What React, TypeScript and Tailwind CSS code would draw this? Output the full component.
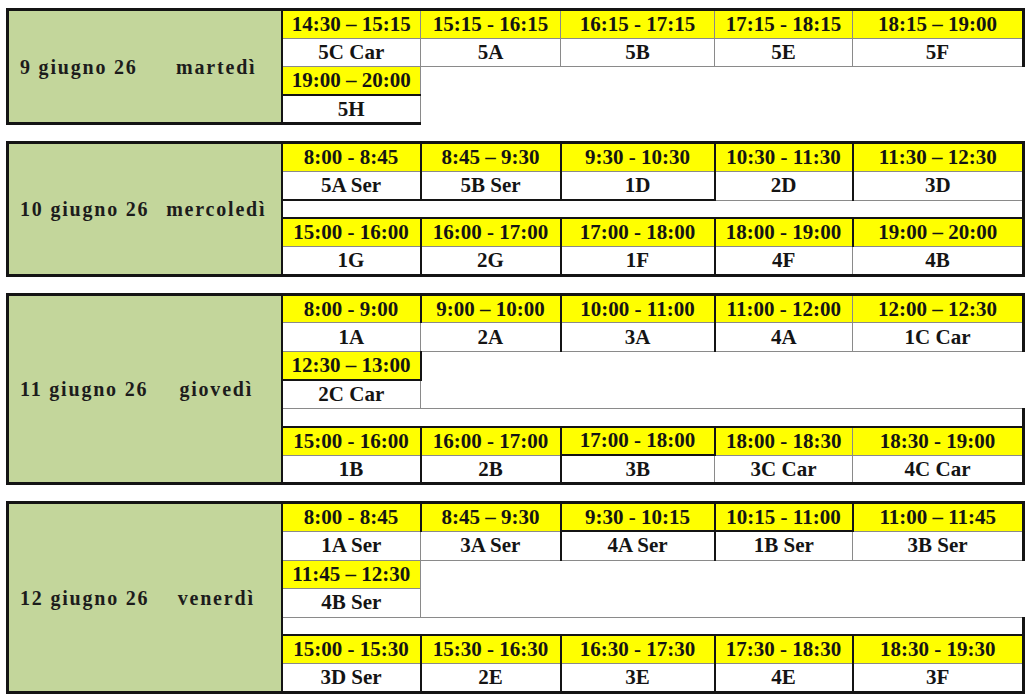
type Cell = { t?: string; y?: boolean; cs?: number; rs?: number; b: string; sp?: boolean };

// border per side: o = outer (3px), k = thick (2px), g = thin grey, n = none
const bt: Record<string, string> = {
  o: 'border-t-[3px] border-t-[#141414]',
  k: 'border-t-2 border-t-[#141414]',
  g: 'border-t border-t-[#8a8a8a]',
  n: 'border-t-0',
};
const br: Record<string, string> = {
  o: 'border-r-[3px] border-r-[#141414]',
  k: 'border-r-2 border-r-[#141414]',
  g: 'border-r border-r-[#8a8a8a]',
  n: 'border-r-0',
};
const bb: Record<string, string> = {
  o: 'border-b-[3px] border-b-[#141414]',
  k: 'border-b-2 border-b-[#141414]',
  g: 'border-b border-b-[#8a8a8a]',
  n: 'border-b-0',
};
const bl: Record<string, string> = {
  o: 'border-l-[3px] border-l-[#141414]',
  k: 'border-l-2 border-l-[#141414]',
  g: 'border-l border-l-[#8a8a8a]',
  n: 'border-l-0',
};

const borders = (s: string) => `${bt[s[0]]} ${br[s[1]]} ${bb[s[2]]} ${bl[s[3]]}`;

const Y = (t: string, b: string): Cell => ({ t, y: true, b });
const W = (t: string, b: string): Cell => ({ t, b });

interface Day {
  date: string;
  weekday: string;
  rows: Cell[][];
}

const days: Day[] = [
  {
    date: '9 giugno 26',
    weekday: 'martedì',
    rows: [
      [Y('14:30 – 15:15', 'oggk'), Y('15:15 - 16:15', 'oggg'), Y('16:15 - 17:15', 'oggg'), Y('17:15 - 18:15', 'oggg'), Y('18:15 – 19:00', 'oogg')],
      [W('5C Car', 'gggk'), W('5A', 'gggg'), W('5B', 'gggg'), W('5E', 'gggg'), W('5F', 'gogg')],
      [Y('19:00 – 20:00', 'ggkk'), { cs: 4, rs: 2, b: 'gnnn' }],
      [W('5H', 'kgok')],
    ],
  },
  {
    date: '10 giugno 26',
    weekday: 'mercoledì',
    rows: [
      [Y('8:00 - 8:45', 'okgk'), Y('8:45 – 9:30', 'okgk'), Y('9:30 - 10:30', 'okgk'), Y('10:30 - 11:30', 'okgk'), Y('11:30 – 12:30', 'oogk')],
      [W('5A Ser', 'gkkk'), W('5B Ser', 'gkkk'), W('1D', 'gkkk'), W('2D', 'gkgk'), W('3D', 'gogk')],
      [{ cs: 5, b: 'gokk', sp: true }],
      [Y('15:00 - 16:00', 'kkgk'), Y('16:00 - 17:00', 'kkgk'), Y('17:00 - 18:00', 'kkgk'), Y('18:00 - 19:00', 'kkgk'), Y('19:00 – 20:00', 'kogk')],
      [W('1G', 'gkok'), W('2G', 'gkok'), W('1F', 'gkok'), W('4F', 'ggok'), W('4B', 'goog')],
    ],
  },
  {
    date: '11 giugno 26',
    weekday: 'giovedì',
    rows: [
      [Y('8:00 - 9:00', 'okgk'), Y('9:00 – 10:00', 'okgk'), Y('10:00 - 11:00', 'okgk'), Y('11:00 - 12:00', 'oggk'), Y('12:00 – 12:30', 'oogg')],
      [W('1A', 'gggk'), W('2A', 'gkgg'), W('3A', 'gkgk'), W('4A', 'gggk'), W('1C Car', 'gogg')],
      [Y('12:30 – 13:00', 'gkkk'), { cs: 4, rs: 2, b: 'gnnn' }],
      [W('2C Car', 'kggk')],
      [{ cs: 5, b: 'gokk', sp: true }],
      [Y('15:00 - 16:00', 'kkgk'), Y('16:00 - 17:00', 'kkgk'), Y('17:00 - 18:00', 'kkkk'), Y('18:00 - 18:30', 'kggk'), Y('18:30 - 19:00', 'kogg')],
      [W('1B', 'gkok'), W('2B', 'gkok'), W('3B', 'kgok'), W('3C Car', 'ggog'), W('4C Car', 'goog')],
    ],
  },
  {
    date: '12 giugno 26',
    weekday: 'venerdì',
    rows: [
      [Y('8:00 - 8:45', 'okgk'), Y('8:45 – 9:30', 'okgk'), Y('9:30 - 10:15', 'okkk'), Y('10:15 - 11:00', 'okkk'), Y('11:00 – 11:45', 'oogg')],
      [W('1A Ser', 'gggk'), W('3A Ser', 'gkgg'), W('4A Ser', 'kkgk'), W('1B Ser', 'kggk'), W('3B Ser', 'gogg')],
      [Y('11:45 – 12:30', 'gggk'), { cs: 4, rs: 2, b: 'gnnn' }],
      [W('4B Ser', 'gggk')],
      [{ cs: 5, b: 'gokk', sp: true }],
      [Y('15:00 - 15:30', 'kkgk'), Y('15:30 - 16:30', 'kkgk'), Y('16:30 - 17:30', 'kkgk'), Y('17:30 - 18:30', 'kkgk'), Y('18:30 - 19:30', 'kogk')],
      [W('3D Ser', 'gkok'), W('2E', 'gkok'), W('3E', 'gkok'), W('4E', 'gkok'), W('3F', 'goog')],
    ],
  },
];

function DayTable({ day }: { day: Day }) {
  return (
    <table className="w-[1016px] table-fixed border-collapse">
      <colgroup>
        <col className="w-[274px]" />
        <col className="w-[139px]" />
        <col className="w-[140px]" />
        <col className="w-[154px]" />
        <col className="w-[138px]" />
        <col className="w-[171px]" />
      </colgroup>
      <tbody>
        {day.rows.map((row, ri) => (
          <tr key={ri} className={row[0].sp ? 'h-[18px]' : 'h-[28.6px]'}>
            {ri === 0 && (
              <td rowSpan={day.rows.length} className={`bg-[#c3d69b] p-0 align-middle ${borders('okoo')}`}>
                <div className="flex items-center pl-[11px] text-[20px] font-bold tracking-[1.8px] text-[#1c1c1c]">
                  <span className="w-[132px]">{day.date}</span>
                  <span className="flex-1 text-center">{day.weekday}</span>
                </div>
              </td>
            )}
            {row.map((c, ci) => (
              <td
                key={ci}
                colSpan={c.cs}
                rowSpan={c.rs}
                className={`p-0 text-center align-middle text-[21px] font-bold leading-none text-[#141414] ${c.y ? 'bg-[#ffff00]' : 'bg-white'} ${borders(c.b)}`}
              >
                {c.t}
              </td>
            ))}
          </tr>
        ))}
      </tbody>
    </table>
  );
}

export default function App() {
  return (
    <div className="min-h-[694px] w-[1030px] bg-white pl-[6px] pt-[8px] font-['Liberation_Serif',serif]">
      <div className="flex flex-col gap-[16px]">
        {days.map((d) => (
          <DayTable key={d.date} day={d} />
        ))}
      </div>
    </div>
  );
}
